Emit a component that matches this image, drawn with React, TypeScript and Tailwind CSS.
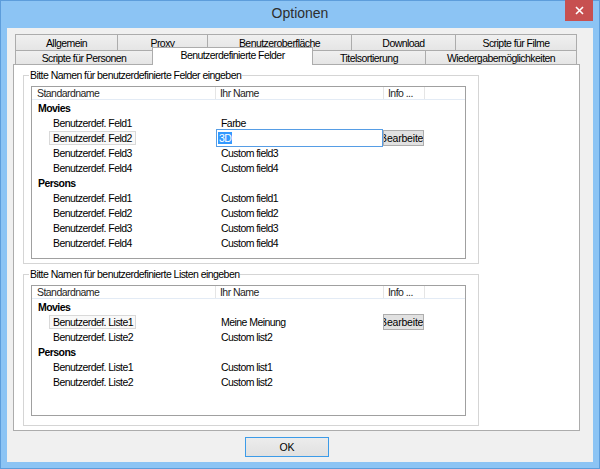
type Row = {
  name: string;
  value?: string;
  focused?: boolean;
  editing?: boolean;
  button?: boolean;
};

type Section = { title: string; rows: Row[] };

const fieldSections: Section[] = [
  {
    title: "Movies",
    rows: [
      { name: "Benutzerdef. Feld1", value: "Farbe" },
      { name: "Benutzerdef. Feld2", value: "3D", focused: true, editing: true, button: true },
      { name: "Benutzerdef. Feld3", value: "Custom field3" },
      { name: "Benutzerdef. Feld4", value: "Custom field4" },
    ],
  },
  {
    title: "Persons",
    rows: [
      { name: "Benutzerdef. Feld1", value: "Custom field1" },
      { name: "Benutzerdef. Feld2", value: "Custom field2" },
      { name: "Benutzerdef. Feld3", value: "Custom field3" },
      { name: "Benutzerdef. Feld4", value: "Custom field4" },
    ],
  },
];

const listSections: Section[] = [
  {
    title: "Movies",
    rows: [
      { name: "Benutzerdef. Liste1", value: "Meine Meinung", focused: true, button: true },
      { name: "Benutzerdef. Liste2", value: "Custom list2" },
    ],
  },
  {
    title: "Persons",
    rows: [
      { name: "Benutzerdef. Liste1", value: "Custom list1" },
      { name: "Benutzerdef. Liste2", value: "Custom list2" },
    ],
  },
];

const topTabs = [
  { label: "Allgemein", cls: "w-[103px] border-l" },
  { label: "Proxy", cls: "w-[90px]" },
  { label: "Benutzeroberfläche", cls: "w-[144px]" },
  { label: "Download", cls: "w-[104px]" },
  { label: "Scripte für Filme", cls: "w-[121px]" },
];

const tabBase =
  "flex shrink-0 items-center justify-center whitespace-nowrap border-t border-r border-[#acacac] bg-linear-to-b from-[#f0f0f0] to-[#e5e5e5]";

// the caption is wider than the button, windows clips it on both sides
function BearbeitenButton() {
  return (
    <div className="h-[16px] w-[41px] shrink-0 overflow-hidden border border-[#adadad] bg-[#e1e1e1]">
      <span className="-ml-[4px] block w-[49px] whitespace-nowrap text-center leading-[14px] tracking-[-0.2px]">
        Bearbeiten
      </span>
    </div>
  );
}

function ListRow({ row }: { row: Row }) {
  return (
    <div className="flex h-[15px] items-center">
      <div className="w-[184px] shrink-0 pl-[17px]">
        <span
          className={
            row.focused
              ? "flex h-[14px] w-[87px] items-center border border-[#d9d9d9] bg-[#f9f9f9] pl-[3px]"
              : "flex h-[14px] items-center border border-transparent pl-[3px]"
          }
        >
          {row.name}
        </span>
      </div>
      {row.editing ? (
        <div className="flex h-[18px] w-[167px] shrink-0 items-center border border-[#569de5] bg-white pl-px">
          <span className="bg-[#3399ff] px-px text-white">{row.value}</span>
        </div>
      ) : (
        <div className="w-[167px] shrink-0 pl-[5px]">{row.value}</div>
      )}
      {row.button && <BearbeitenButton />}
    </div>
  );
}

function ListBox({ sections, height }: { sections: Section[]; height: string }) {
  return (
    <div className={`w-[435px] border border-[#a0a0a0] bg-white ${height}`}>
      <div className="flex h-[13px] border-b border-[#e3ebf5] text-[#1e1e1e]">
        <div className="flex w-[184px] items-center border-r border-[#e5e5e5] pl-[5px]">Standardname</div>
        <div className="flex w-[168px] items-center border-r border-[#e5e5e5] pl-[4px]">Ihr Name</div>
        <div className="flex w-[41px] items-center border-r border-[#e5e5e5] pl-[4px]">Info ...</div>
      </div>
      {sections.map((s, i) => (
        <div key={i}>
          <div className="flex h-[15px] items-center pl-[6px] font-bold">{s.title}</div>
          {s.rows.map((r, j) => (
            <ListRow key={j} row={r} />
          ))}
        </div>
      ))}
    </div>
  );
}

function GroupBox({
  label,
  className,
  children,
}: {
  label: string;
  className: string;
  children: React.ReactNode;
}) {
  return (
    <fieldset className={`w-[456px] border border-[#d5d5d5] ${className}`}>
      <legend className="ml-[5px] px-px leading-[12px]">{label}</legend>
      <div className="pl-[7px] pt-[5px]">{children}</div>
    </fieldset>
  );
}

export default function App() {
  return (
    <div className="h-[469px] w-[600px] font-['Liberation_Sans',Arial,sans-serif] text-[10.5px] leading-[12px] tracking-[-0.55px] text-black">
      <div className="flex h-full w-full flex-col border border-[#5d9ddb] bg-[#8cc4f4]">
        {/* title bar */}
        <div className="grid h-[27px] shrink-0 grid-cols-[1fr_auto_1fr]">
          <div />
          <div className="pt-[4px] text-[14px] leading-[16px] tracking-normal text-[#2e2e2e]">Optionen</div>
          <div className="flex justify-end pr-[6px]">
            <div className="-mt-px flex h-[21px] w-[28px] items-center justify-center bg-[#c75050]">
              <svg width="9" height="9" viewBox="0 0 9 9">
                <path d="M1 1L8 8M8 1L1 8" stroke="white" strokeWidth="1.6" />
              </svg>
            </div>
          </div>
        </div>

        {/* client area */}
        <div className="ml-[6px] h-[434px] w-[586px] bg-[#f0f0f0] pl-[6px] pt-[6px]">
          <div className="w-[567px]">
            <div className="flex h-[16px] pl-[2px]">
              {topTabs.map((t) => (
                <div key={t.label} className={`${tabBase} ${t.cls}`}>
                  {t.label}
                </div>
              ))}
            </div>
            <div className="flex h-[14px] items-start pl-[2px]">
              <div className={`${tabBase} h-[14px] w-[137px] border-l border-r-0`}>Scripte für Personen</div>
              <div className="relative z-10 -mt-[3px] flex h-[18px] w-[161px] shrink-0 justify-center whitespace-nowrap border border-b-0 border-[#acacac] bg-white pt-[1px]">
                Benutzerdefinierte Felder
              </div>
              <div className={`${tabBase} h-[14px] w-[113px]`}>Titelsortierung</div>
              <div className={`${tabBase} h-[14px] w-[151px]`}>Wiedergabemöglichkeiten</div>
            </div>

            <div className="h-[367px] w-[567px] border border-[#acacac] bg-white pl-[9px] pt-[4px]">
              <GroupBox label="Bitte Namen für benutzerdefinierte Felder eingeben" className="h-[195px]">
                <ListBox sections={fieldSections} height="h-[173px]" />
              </GroupBox>
              <GroupBox label="Bitte Namen für benutzerdefinierte Listen eingeben" className="mt-[4px] h-[158px]">
                <ListBox sections={listSections} height="h-[131px]" />
              </GroupBox>
            </div>
          </div>

          <div className="ml-[232px] mt-[6px] flex h-[20px] w-[84px] items-center justify-center border border-[#3c9be8] bg-linear-to-b from-[#ececec] to-[#e1e1e1] tracking-normal">
            OK
          </div>
        </div>
      </div>
    </div>
  );
}
